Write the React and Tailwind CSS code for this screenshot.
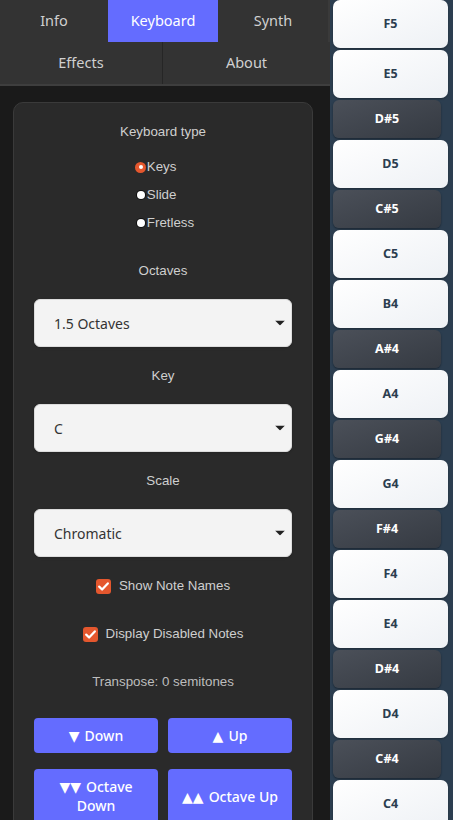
import React from "react";

const keys = [
  ["F5", false], ["E5", false], ["D#5", true], ["D5", false], ["C#5", true], ["C5", false],
  ["B4", false], ["A#4", true], ["A4", false], ["G#4", true], ["G4", false], ["F#4", true],
  ["F4", false], ["E4", false], ["D#4", true], ["D4", false], ["C#4", true], ["C4", false],
];

const Caret = () => (
  <svg width="10" height="5" viewBox="0 0 10 5" className="absolute right-[6px] top-1/2 -translate-y-1/2">
    <path d="M0 0h10L5 5z" fill="#222" />
  </svg>
);

const Select = ({ value }) => (
  <div className="relative flex h-[48px] items-center rounded-[6px] border border-[#dcdcdc] bg-[#f3f3f3] pl-[19px] text-[14px] text-[#333] shadow-sm font-[family-name:Noto_Sans,sans-serif]">
    {value}
    <Caret />
  </div>
);

const Label = ({ children, className = "" }) => (
  <div className={"h-[20px] text-center text-[13.33px] leading-[20px] text-[#cfcfcf] " + className}>{children}</div>
);

const Check = ({ label, className = "" }) => (
  <div className={"flex h-[20px] items-center justify-center gap-[8px] " + className}>
    <span className="flex h-[15px] w-[15px] items-center justify-center rounded-[3px] bg-[#e4572e]">
      <svg width="11" height="9" viewBox="0 0 11 9">
        <path d="M1.2 4.6l2.9 2.9L9.8 1.4" stroke="#fff" strokeWidth="2.2" fill="none" strokeLinecap="round" strokeLinejoin="round" />
      </svg>
    </span>
    <span className="text-[13.33px] text-[#cfcfcf]">{label}</span>
  </div>
);

const Radio = ({ label, checked }) => (
  <div className="flex h-[28px] items-center">
    <span className="flex w-[12px] justify-center">
      {checked ? (
        <span className="flex h-[11px] w-[11px] items-center justify-center rounded-full bg-[#e4572e]">
          <span className="h-[4px] w-[4px] rounded-full bg-white" />
        </span>
      ) : (
        <span className="h-[8px] w-[8px] rounded-full bg-white shadow-[0_0_0_1px_#111]" />
      )}
    </span>
    <span className="text-[13.33px] text-[#cfcfcf]">{label}</span>
  </div>
);

const Tri = ({ children }) => (
  <span className="mr-[5px] inline-block text-[14px] leading-none font-[family-name:DejaVu_Sans,sans-serif]">{children}</span>
);

export default function App() {
  return (
    <div className="flex h-[820px] w-[453px] overflow-hidden bg-[#1a1a1a] font-[family-name:Liberation_Sans,Arial,sans-serif]">
      {/* left panel */}
      <div className="flex w-[330px] shrink-0 flex-col">
        <div className="border-b-2 border-[#3e3e3e] bg-[#333] text-[14.5px] text-[#d0d0d0] font-[family-name:Noto_Sans,sans-serif]">
          <div className="grid h-[42px] grid-cols-[108px_110px_1fr] border-r-2 border-[#3a3a3a]">
            <button className="flex items-center justify-center">Info</button>
            <button className="flex items-center justify-center bg-[#646cff] text-white">Keyboard</button>
            <button className="flex items-center justify-center">Synth</button>
          </div>
          <div className="grid h-[42px] grid-cols-[163px_1fr]">
            <button className="flex items-center justify-center border-r border-[#262626]">Effects</button>
            <button className="flex items-center justify-center">About</button>
          </div>
        </div>

        <div className="flex-1 overflow-hidden pl-[13px] pt-[16px]">
          <div className="w-[300px] rounded-[10px] border border-[#3a3a3a] bg-[#2a2a2a] px-[20px] pb-6 pt-[19px]">
            <Label>Keyboard type</Label>
            <div className="mx-auto mt-[11px] w-fit pl-[3px]">
              <Radio label="Keys" checked />
              <Radio label="Slide" />
              <Radio label="Fretless" />
            </div>

            <Label className="mt-[24px]">Octaves</Label>
            <div className="mt-[18px]"><Select value="1.5 Octaves" /></div>

            <Label className="mt-[19px]">Key</Label>
            <div className="mt-[18px]"><Select value="C" /></div>

            <Label className="mt-[19px]">Scale</Label>
            <div className="mt-[18px]"><Select value="Chromatic" /></div>

            <Check label="Show Note Names" className="mt-[19px]" />
            <Check label="Display Disabled Notes" className="mt-[28px]" />

            <div className="mt-[28px] h-[20px] text-center text-[13.33px] leading-[20px] text-[#bdbdbd]">Transpose: 0 semitones</div>

            <div className="mt-[26px] grid grid-cols-2 gap-x-[10px] gap-y-[16px] text-[14px] font-medium text-white font-[family-name:Noto_Sans,sans-serif]">
              <button className="h-[35px] rounded-[4px] bg-[#646cff]"><Tri>▼</Tri>Down</button>
              <button className="h-[35px] rounded-[4px] bg-[#646cff]"><Tri>▲</Tri>Up</button>
              <button className="rounded-[4px] bg-[#646cff] px-2 py-[8px] leading-[19px]">
                <Tri>▼▼</Tri>Octave<br />Down
              </button>
              <button className="rounded-[4px] bg-[#646cff] px-2 py-[8px] leading-[19px]"><Tri>▲▲</Tri>Octave Up</button>
            </div>
          </div>
        </div>
      </div>

      {/* keyboard strip */}
      <div className="flex flex-1 flex-col gap-[2px] overflow-hidden bg-[#2c3e50] pl-[3px] font-[family-name:Noto_Sans,sans-serif]">
        {keys.map(([name, black]) =>
          black ? (
            <div
              key={name}
              className="flex h-[38px] w-[108px] shrink-0 items-center justify-center rounded-[6px] bg-gradient-to-br from-[#4b5059] to-[#353a42] text-[12.5px] font-bold text-white shadow-[0_1px_2px_rgba(0,0,0,0.4)]"
            >
              {name}
            </div>
          ) : (
            <div
              key={name}
              className="flex h-[48px] w-[115px] shrink-0 items-center justify-center rounded-[7px] bg-gradient-to-br from-white to-[#eef1f5] text-[12.5px] font-bold text-[#2c3e50] shadow-[0_1px_2px_rgba(0,0,0,0.3)]"
            >
              {name}
            </div>
          )
        )}
      </div>
    </div>
  );
}
